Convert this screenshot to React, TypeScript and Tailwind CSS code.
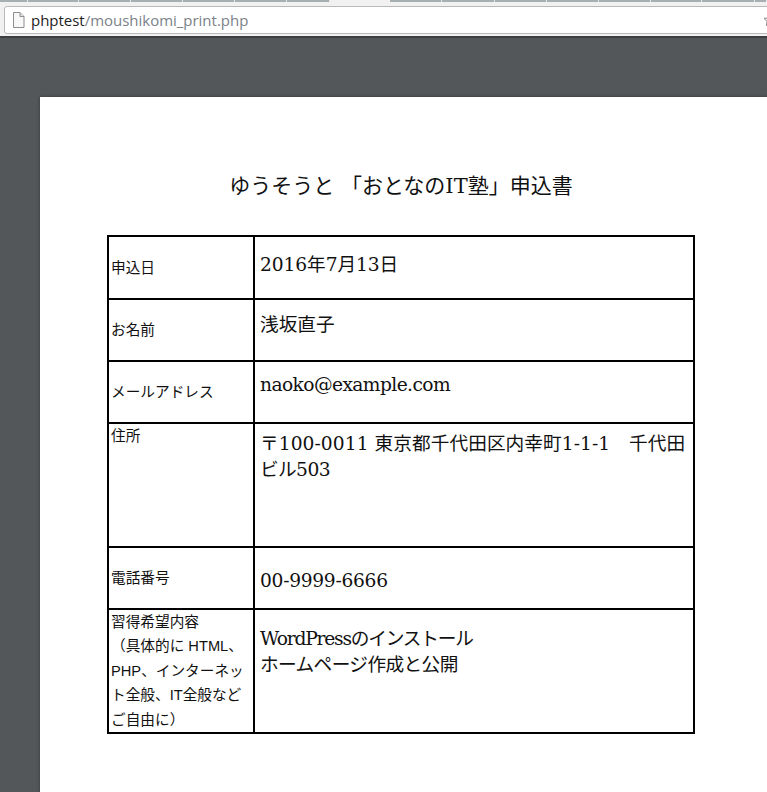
const serif = "font-['DejaVu_Serif','Noto_Sans_CJK_JP',serif]";

const rows = [
  {
    label: '申込日',
    value: [{ text: '2016年7月13日', tracking: 'tracking-[-0.1px]' }],
    height: 'h-[63px]',
    labelAlign: 'align-middle pt-[2px]',
    valuePad: 'pt-[15px]',
  },
  {
    label: 'お名前',
    value: [{ text: '浅坂直子', tracking: 'tracking-[0px]' }],
    height: 'h-[62px]',
    labelAlign: 'align-middle pt-[1px]',
    valuePad: 'pt-[12px]',
  },
  {
    label: 'メールアドレス',
    value: [{ text: 'naoko@example.com', tracking: 'tracking-[-0.6px]' }],
    height: 'h-[62px]',
    labelAlign: 'align-middle',
    valuePad: 'pt-[10px]',
  },
  {
    label: '住所',
    value: [
      { text: '〒100-0011 東京都千代田区内幸町1-1-1　千代田', tracking: 'tracking-[0.06px]' },
      { text: 'ビル503', tracking: 'tracking-[-0.6px]' },
    ],
    height: 'h-[124px]',
    labelAlign: 'align-top',
    valuePad: 'pt-[7px]',
  },
  {
    label: '電話番号',
    value: [{ text: '00-9999-6666', tracking: 'tracking-[-0.3px]' }],
    height: 'h-[62px]',
    labelAlign: 'align-middle',
    valuePad: 'pt-[20px]',
  },
  {
    label: '習得希望内容\n（具体的に HTML、\nPHP、インターネッ\nト全般、IT全般など\nご自由に）',
    value: [
      { text: 'WordPressのインストール', tracking: 'tracking-[-1.2px]' },
      { text: 'ホームページ作成と公開', tracking: 'tracking-[-0.6px]' },
    ],
    height: 'h-[123px]',
    labelAlign: 'align-top',
    valuePad: 'pt-[16px]',
  },
];

const leftTabs = ['w-[28px]', 'w-[51px]', 'w-[52px]', 'w-[52px]', 'w-[52px]', 'w-[52px]', 'w-[43px]'];
const rightTabs = ['w-[52px]', 'w-[53px]', 'w-[52px]', 'w-[52px]', 'w-[52px]', 'w-[51px]', 'w-[53px]', 'flex-1'];

function TabStrip() {
  return (
    <div className="flex h-[2px]">
      {leftTabs.map((w, i) => (
        <div key={i} className={`${w} bg-[#a6b0b4] border-r border-[#e4e6e7]`} />
      ))}
      <div className="w-[60px]" />
      {rightTabs.map((w, i) => (
        <div key={i} className={`${w} bg-[#a6b0b4] border-r border-[#e4e6e7]`} />
      ))}
    </div>
  );
}

function BrowserBar() {
  return (
    <div className="h-[38px] shrink-0 bg-[#f1f1f1] border-b-2 border-[#3c3e40]">
      <TabStrip />
      <div className="ml-[4px] mr-[-6px] mt-[4px] flex h-[28px] items-center rounded-[3px] border border-[#b9b9b9] bg-white pl-[7px]">
        <svg width="13" height="16" viewBox="0 0 13 16" className="shrink-0">
          <path d="M1.5 0.5h6.5l4 4v11h-10.5z" fill="#f8f8f8" stroke="#8f8f8f" />
          <path d="M8 0.5v4h4" fill="#e2e2e2" stroke="#8f8f8f" />
        </svg>
        <span className="ml-[6px] font-['Open_Sans',sans-serif] text-[15px] leading-none tracking-[-0.02px]">
          <span className="text-[#222]">phptest</span>
          <span className="text-[#7a8288]">/moushikomi_print.php</span>
        </span>
        <svg width="14" height="14" viewBox="0 0 14 14" className="ml-auto mr-[-5px] shrink-0">
          <path d="M7 1l1.8 3.9 4.2.5-3.1 2.9.8 4.2L7 10.4l-3.7 2.1.8-4.2L1 5.4l4.2-.5z" fill="none" stroke="#8a8a8a" />
        </svg>
      </div>
    </div>
  );
}

export default function App() {
  return (
    <div className="flex h-[792px] w-[767px] flex-col overflow-hidden bg-[#53575a]">
      <BrowserBar />
      <div className="flex-1 pl-[40px] pt-[59px]">
        <div className="h-full bg-white pl-[67px] pt-[77px] text-black shadow-[0_0_3px_#33363a]">
          <h1 className={`${serif} w-[588px] text-center text-[21px] font-normal leading-[24px] text-[#111]`}>
            ゆうそうと 「おとなのIT塾」申込書
          </h1>
          <table className="mt-[37px] w-[588px] table-fixed border-collapse border-2 border-black">
            <colgroup>
              <col className="w-[146px]" />
              <col />
            </colgroup>
            <tbody>
              {rows.map((row) => (
                <tr key={row.label} className={row.height}>
                  <td
                    className={`${row.labelAlign} border-2 border-black px-[2px] whitespace-pre-line font-['Liberation_Sans','Noto_Sans_CJK_JP',sans-serif] text-[14.67px] leading-[24.4px] text-[#111]`}
                  >
                    {row.label}
                  </td>
                  <td
                    className={`${row.valuePad} ${serif} align-top border-2 border-black pl-[5px] pr-0 text-[18.67px] leading-[26px] text-[#111]`}
                  >
                    {row.value.map((line) => (
                      <div key={line.text} className={`${line.tracking} whitespace-nowrap`}>
                        {line.text}
                      </div>
                    ))}
                  </td>
                </tr>
              ))}
            </tbody>
          </table>
        </div>
      </div>
    </div>
  );
}
